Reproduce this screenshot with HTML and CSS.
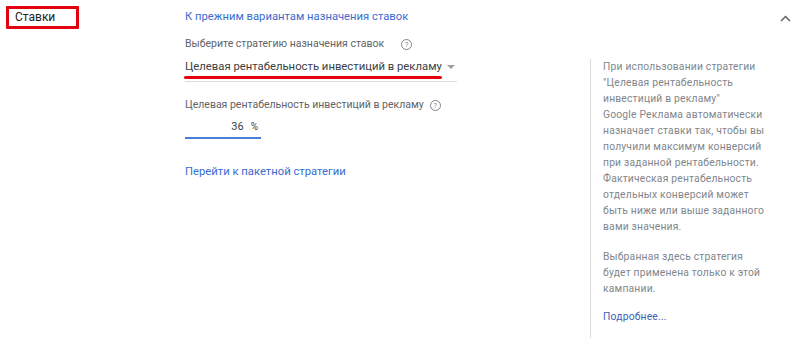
FILE: index.html
```html
<!DOCTYPE html>
<html lang="ru">
<head>
<meta charset="utf-8">
<title>Ставки</title>
<link rel="stylesheet" href="styles.css">
</head>
<body>
<section class="section">
  <div class="title-col">
    <div class="title-box">Ставки</div>
  </div>
  <div class="content">
    <div class="top-row">
      <a class="link" href="#">К прежним вариантам назначения ставок</a>
      <svg class="chevron" width="11" height="7" viewBox="0 0 11 7"><path d="M1 6 L5.5 1.5 L10 6" fill="none" stroke="#5f6368" stroke-width="1.5"/></svg>
    </div>
    <div class="body">
      <div class="form">
        <div class="label">Выберите стратегию назначения ставок <span class="help help-wide">?</span></div>
        <div class="select">
          <span class="select-text">Целевая рентабельность инвестиций в рекламу</span>
          <span class="caret"></span>
          <span class="red-mark"></span>
        </div>
        <div class="label label2">Целевая рентабельность инвестиций в рекламу <span class="help">?</span></div>
        <div class="percent-field"><span class="num">36</span><span class="pct">%</span></div>
        <a class="link link2" href="#">Перейти к пакетной стратегии</a>
      </div>
      <aside class="aside">
        <p>При использовании стратегии "Целевая рентабельность инвестиций в рекламу"<br>Google Реклама автоматически назначает ставки так, чтобы вы получили максимум конверсий при заданной рентабельности. Фактическая рентабельность отдельных конверсий может быть ниже или выше заданного вами значения.</p>
        <p class="p2">Выбранная здесь стратегия будет применена только к этой кампании.</p>
        <a class="more" href="#">Подробнее...</a>
      </aside>
    </div>
  </div>
</section>
</body>
</html>
```
FILE: styles.css
```css
html, body {
  margin: 0;
  padding: 0;
  background: #fff;
  font-family: Roboto, "Liberation Sans", Arial, sans-serif;
}
.section {
  display: flex;
  width: 800px;
  height: 338px;
  overflow: hidden;
}
.title-col {
  width: 185px;
  flex: none;
  padding: 6px 0 0 6px;
  box-sizing: border-box;
}
.title-box {
  width: 73px;
  height: 23px;
  box-sizing: border-box;
  border: 3px solid #e3000f;
  border-radius: 1px;
  padding-left: 6px;
  font-size: 12px;
  line-height: 16px;
  color: #202124;
}
.content {
  flex: 1;
  display: flex;
  flex-direction: column;
}
.top-row {
  display: flex;
  justify-content: space-between;
  align-items: center;
  padding-top: 9px;
  padding-right: 9px;
}
.link {
  color: #3b6ccf;
  text-decoration: none;
  font-size: 11.25px;
  line-height: 16px;
}
.chevron {
  margin-top: 2px;
}
.body {
  display: flex;
}
.form {
  width: 405px;
  flex: none;
  display: flex;
  flex-direction: column;
  align-items: flex-start;
}
.label {
  margin-top: 12px;
  font-size: 10.5px;
  line-height: 14px;
  color: #5f6368;
  display: flex;
  align-items: center;
  white-space: nowrap;
}
.help {
  display: inline-flex;
  align-items: center;
  justify-content: center;
  width: 9px;
  height: 9px;
  border: 1px solid #80868b;
  border-radius: 50%;
  font-size: 7.5px;
  line-height: 9px;
  color: #80868b;
  margin-left: 6px;
}
.help-wide {
  margin-left: 17px;
}
.select {
  position: relative;
  margin-top: 8px;
  width: 272px;
  height: 22px;
  border-bottom: 1px solid #dadce0;
  display: flex;
  align-items: flex-start;
  white-space: nowrap;
}
.select-text {
  font-size: 11.3px;
  line-height: 16px;
  color: #3c4043;
}
.caret {
  margin-left: 5px;
  margin-top: 6px;
  width: 0;
  height: 0;
  border-left: 4.5px solid transparent;
  border-right: 4.5px solid transparent;
  border-top: 4.5px solid #9aa0a6;
}
.red-mark {
  position: absolute;
  left: -1px;
  top: 17px;
  width: 258px;
  height: 3px;
  background: #e3000f;
  border-radius: 2px;
}
.label2 {
  margin-top: 16px;
}
.percent-field {
  margin-top: 8px;
  width: 76px;
  height: 19px;
  border-bottom: 2px solid #4a7fd4;
  display: flex;
  justify-content: flex-end;
  align-items: flex-start;
  font-size: 11px;
  line-height: 14px;
  color: #3c4043;
  box-sizing: border-box;
  padding-right: 3px;
}
.pct {
  margin-left: 7px;
  font-size: 10px;
}
.link2 {
  margin-top: 25px;
}
.aside {
  margin-top: 34px;
  border-left: 1px solid #dadce0;
  padding-left: 12px;
  width: 170px;
  font-size: 10.3px;
  line-height: 16px;
  color: #80868b;
  letter-spacing: 0.2px;
  height: 300px;
}
.aside p {
  margin: 0 0 14px 0;
}
.aside .p2 {
  margin-bottom: 12px;
}
.more {
  color: #3c5fb8;
  text-decoration: none;
}
```
